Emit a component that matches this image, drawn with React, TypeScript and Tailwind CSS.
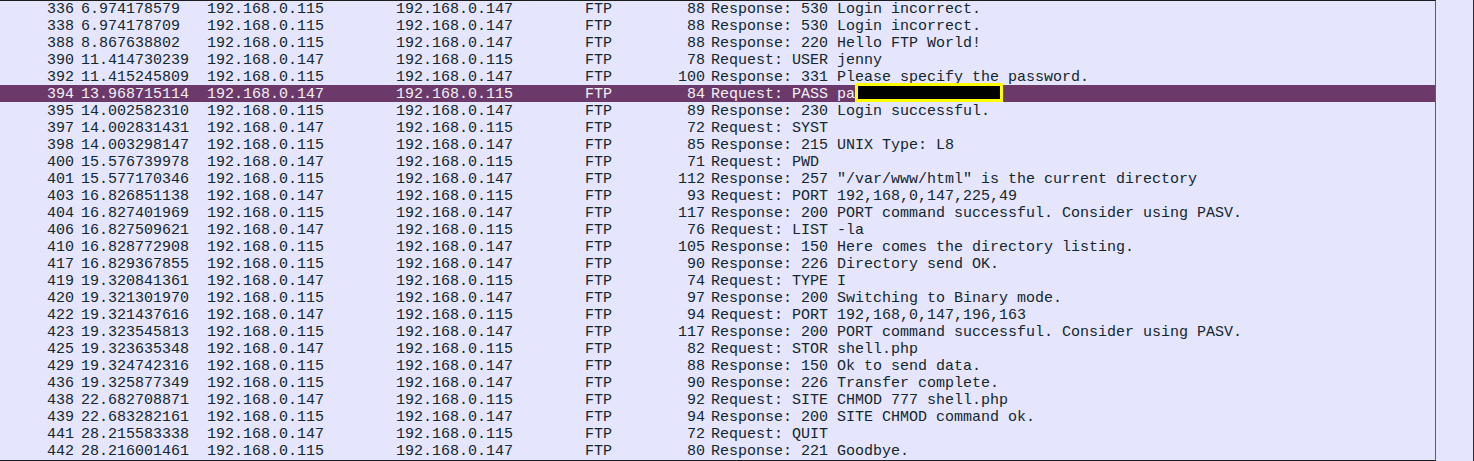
type Packet = {
  no: number;
  time: string;
  src: string;
  dst: string;
  len: number;
  info: string;
  redacted?: boolean;
};

const A = "192.168.0.115";
const B = "192.168.0.147";

const packets: Packet[] = [
  { no: 336, time: "6.974178579", src: A, dst: B, len: 88, info: "Response: 530 Login incorrect." },
  { no: 338, time: "6.974178709", src: A, dst: B, len: 88, info: "Response: 530 Login incorrect." },
  { no: 388, time: "8.867638802", src: A, dst: B, len: 88, info: "Response: 220 Hello FTP World!" },
  { no: 390, time: "11.414730239", src: B, dst: A, len: 78, info: "Request: USER jenny" },
  { no: 392, time: "11.415245809", src: A, dst: B, len: 100, info: "Response: 331 Please specify the password." },
  { no: 394, time: "13.968715114", src: B, dst: A, len: 84, info: "Request: PASS pa", redacted: true },
  { no: 395, time: "14.002582310", src: A, dst: B, len: 89, info: "Response: 230 Login successful." },
  { no: 397, time: "14.002831431", src: B, dst: A, len: 72, info: "Request: SYST" },
  { no: 398, time: "14.003298147", src: A, dst: B, len: 85, info: "Response: 215 UNIX Type: L8" },
  { no: 400, time: "15.576739978", src: B, dst: A, len: 71, info: "Request: PWD" },
  { no: 401, time: "15.577170346", src: A, dst: B, len: 112, info: 'Response: 257 "/var/www/html" is the current directory' },
  { no: 403, time: "16.826851138", src: B, dst: A, len: 93, info: "Request: PORT 192,168,0,147,225,49" },
  { no: 404, time: "16.827401969", src: A, dst: B, len: 117, info: "Response: 200 PORT command successful. Consider using PASV." },
  { no: 406, time: "16.827509621", src: B, dst: A, len: 76, info: "Request: LIST -la" },
  { no: 410, time: "16.828772908", src: A, dst: B, len: 105, info: "Response: 150 Here comes the directory listing." },
  { no: 417, time: "16.829367855", src: A, dst: B, len: 90, info: "Response: 226 Directory send OK." },
  { no: 419, time: "19.320841361", src: B, dst: A, len: 74, info: "Request: TYPE I" },
  { no: 420, time: "19.321301970", src: A, dst: B, len: 97, info: "Response: 200 Switching to Binary mode." },
  { no: 422, time: "19.321437616", src: B, dst: A, len: 94, info: "Request: PORT 192,168,0,147,196,163" },
  { no: 423, time: "19.323545813", src: A, dst: B, len: 117, info: "Response: 200 PORT command successful. Consider using PASV." },
  { no: 425, time: "19.323635348", src: B, dst: A, len: 82, info: "Request: STOR shell.php" },
  { no: 429, time: "19.324742316", src: A, dst: B, len: 88, info: "Response: 150 Ok to send data." },
  { no: 436, time: "19.325877349", src: A, dst: B, len: 90, info: "Response: 226 Transfer complete." },
  { no: 438, time: "22.682708871", src: B, dst: A, len: 92, info: "Request: SITE CHMOD 777 shell.php" },
  { no: 439, time: "22.683282161", src: A, dst: B, len: 94, info: "Response: 200 SITE CHMOD command ok." },
  { no: 441, time: "28.215583338", src: B, dst: A, len: 72, info: "Request: QUIT" },
  { no: 442, time: "28.216001461", src: A, dst: B, len: 80, info: "Response: 221 Goodbye." },
];

const SELECTED = 394;

const PacketRow = ({ p }: { p: Packet }) => {
  const selected = p.no === SELECTED;
  return (
    <div
      className={`flex h-[17px] pt-px leading-[17px] whitespace-pre ${
        selected ? "bg-[#6b3a6b] text-[#f4f0f4]" : "text-[#12272e]"
      }`}
    >
      <div className="w-[78px] shrink-0 pr-[4px] text-right">{p.no}</div>
      <div className="w-[126px] shrink-0 pl-[3px]">{p.time}</div>
      <div className="w-[189px] shrink-0 pl-[3px]">{p.src}</div>
      <div className="w-[189px] shrink-0 pl-[3px]">{p.dst}</div>
      <div className="w-[60px] shrink-0 pl-[3px]">FTP</div>
      <div className="w-[66px] shrink-0 pr-[3px] text-right">{p.len}</div>
      <div className="flex flex-1 items-start pl-[3px]">
        <span>{p.info}</span>
        {p.redacted && (
          <span className="relative -top-[3px] inline-block h-[19px] w-[148px] shrink-0 border-[3px] border-[#ffff00] bg-black" />
        )}
      </div>
    </div>
  );
};

export default function App() {
  return (
    <div
      className="flex h-[461px] w-[1474px] overflow-hidden bg-[#e5e5fd] text-[15px]"
      style={{ fontFamily: '"Liberation Mono", monospace' }}
    >
      {/* packet list */}
      <div className="flex h-full w-[1436px] shrink-0 flex-col border-t border-b border-r border-t-[#1c1c1c] border-b-[#1c1c1c] border-r-[#5c5c66]">
        <div className="-mt-px flex flex-col">
          {packets.map((p) => (
            <PacketRow key={p.no} p={p} />
          ))}
        </div>
      </div>
      {/* scrollbar gutter */}
      <div className="h-full flex-1 border-r border-r-[#2a2a2a] bg-[#e5e5fd]" />
    </div>
  );
}
